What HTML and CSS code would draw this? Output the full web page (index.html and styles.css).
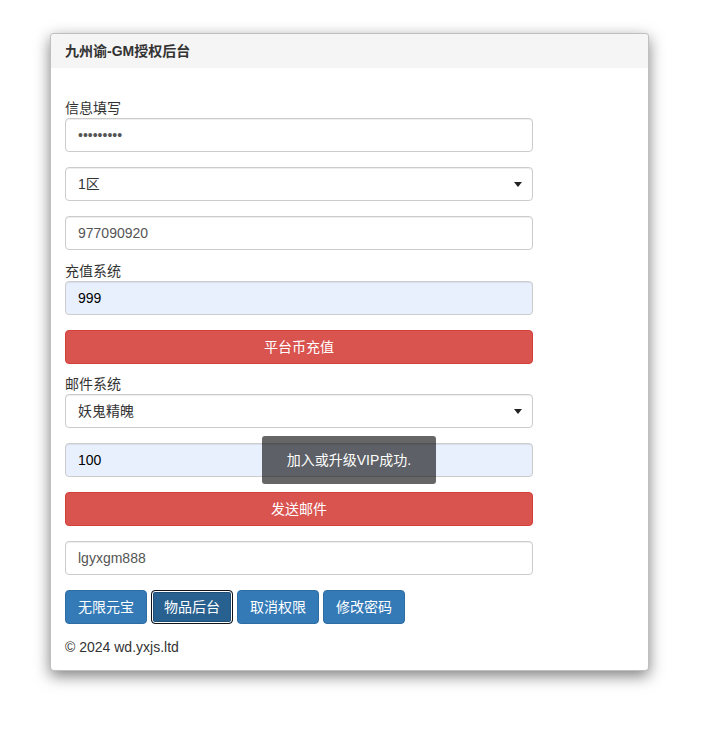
FILE: index.html
```html
<!DOCTYPE html>
<html lang="zh-CN">
<head>
<meta charset="utf-8">
<title>九州谕-GM授权后台</title>
<link rel="stylesheet" href="styles.css">
</head>
<body>
<div class="page">
  <div class="panel">
    <div class="panel-heading">九州谕-GM授权后台</div>
    <div class="panel-body">
      <form class="gm-form">
        <label class="field-label">信息填写</label>
        <input class="form-control gap-15" type="password" value="123456789">
        <div class="select-wrap gap-15">
          <select class="form-control"><option>1区</option></select>
        </div>
        <input class="form-control gap-11" type="text" value="977090920">

        <label class="field-label">充值系统</label>
        <input class="form-control filled gap-15" type="text" value="999">
        <button type="button" class="btn btn-danger btn-block gap-10">平台币充值</button>

        <label class="field-label">邮件系统</label>
        <div class="select-wrap gap-15">
          <select class="form-control"><option>妖鬼精魄</option></select>
        </div>
        <input class="form-control filled gap-15" type="text" value="100">
        <button type="button" class="btn btn-danger btn-block gap-15">发送邮件</button>
        <input class="form-control gap-15" type="text" value="lgyxgm888">

        <div class="btn-row">
          <button type="button" class="btn btn-primary">无限元宝</button>
          <button type="button" class="btn btn-primary is-focused">物品后台</button>
          <button type="button" class="btn btn-primary">取消权限</button>
          <button type="button" class="btn btn-primary">修改密码</button>
        </div>
      </form>
      <p class="copyright">© 2024 wd.yxjs.ltd</p>
    </div>
    <div class="toast">加入或升级VIP成功.</div>
  </div>
</div>
</body>
</html>
```

FILE: styles.css
```css
* {
  box-sizing: border-box;
}

html, body {
  margin: 0;
  background: #fff;
}

body {
  font-family: "Liberation Sans", Arial, "Noto Sans CJK SC", sans-serif;
  font-size: 14px;
  line-height: 20px;
  color: #333;
}

.page {
  padding: 33px 0 80px 50px;
}

.panel {
  position: relative;
  width: 599px;
  background: #fff;
  border: 1px solid rgba(0, 0, 0, 0.25);
  border-radius: 4px;
  box-shadow: 0 5px 15px rgba(0, 0, 0, 0.5);
}

.panel-heading {
  height: 34px;
  padding: 7px 14px;
  background: #f5f5f5;
  border-radius: 3px 3px 0 0;
  font-weight: bold;
  color: #333;
}

.panel-body {
  padding: 30px 14px 13px;
}

.gm-form {
  width: 468px;
  display: flex;
  flex-direction: column;
}

.field-label {
  display: block;
  height: 20px;
}

.form-control {
  display: block;
  width: 100%;
  height: 34px;
  padding: 6px 12px;
  font: inherit;
  color: #555;
  background: #fff;
  border: 1px solid #ccc;
  border-radius: 4px;
  box-shadow: inset 0 1px 1px rgba(0, 0, 0, 0.075);
  outline: none;
}

.form-control.filled {
  background: #e8f0fe;
  color: #000;
}

select.form-control {
  -webkit-appearance: none;
  appearance: none;
  color: #333;
  padding-left: 12px;
}

.select-wrap {
  position: relative;
}

.select-wrap::after {
  content: "";
  position: absolute;
  right: 11px;
  top: 15px;
  border-left: 4px solid transparent;
  border-right: 4px solid transparent;
  border-top: 5px solid #222;
  pointer-events: none;
}

.gap-15 { margin-bottom: 15px; }
.gap-11 { margin-bottom: 11px; }
.gap-10 { margin-bottom: 10px; }

.btn {
  display: inline-block;
  height: 34px;
  padding: 6px 12px;
  font: inherit;
  line-height: 20px;
  color: #fff;
  border: 1px solid transparent;
  border-radius: 4px;
  cursor: pointer;
}

.btn-block {
  display: block;
  width: 100%;
}

.btn-danger {
  background: #d9534f;
  border-color: #d43f3a;
}

.btn-primary {
  background: #337ab7;
  border-color: #2e6da4;
}

.btn-row {
  display: flex;
  gap: 4px;
}

/* keyboard focus ring drawn inside the button box */
.btn-primary.is-focused {
  background: #286090;
  border-color: #101418;
  box-shadow: inset 0 0 0 1px #fff, inset 0 0 0 2px #204d74;
}

.copyright {
  margin: 13px 0 0;
}

.toast {
  position: absolute;
  left: 211px;
  top: 402px;
  width: 174px;
  height: 48px;
  padding: 14px 0;
  text-align: center;
  color: #fff;
  background: rgba(0, 0, 0, 0.6);
  border-radius: 3px;
}
```
